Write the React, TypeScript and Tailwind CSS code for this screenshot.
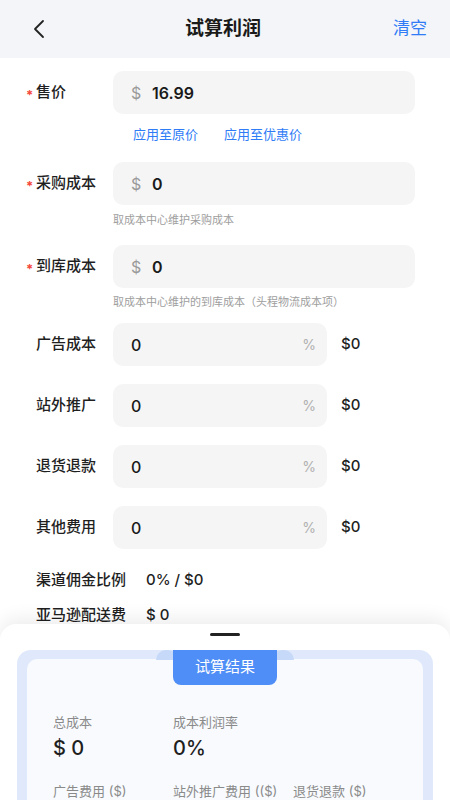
import React from "react";

const font = { fontFamily: '"Inter", "Noto Sans CJK SC", sans-serif' };

interface RowProps {
  label: string;
  required?: boolean;
  children: React.ReactNode;
  className?: string;
}

const Row: React.FC<RowProps> = ({ label, required, children, className }) => (
  <div className={`flex items-center ${className ?? ""}`}>
    <div className="flex w-[87px] shrink-0 items-center">
      <span className="w-[10px] pt-[5px] text-[13px] font-bold leading-none text-[#f5483b]">{required ? "*" : ""}</span>
      <span className="text-[15px] font-medium text-[#1f1f1f]">{label}</span>
    </div>
    {children}
  </div>
);

const MoneyInput: React.FC<{ value: string }> = ({ value }) => (
  <div className="flex h-[43px] w-[302px] items-center rounded-[10px] bg-[#f5f5f5] pl-[18px]">
    <span className="w-[21px] text-[16px] text-[#9a9a9a]">$</span>
    <span className="text-[16px] font-semibold text-[#1a1a1a]">{value}</span>
  </div>
);

const PercentRow: React.FC<{ label: string; className?: string }> = ({ label, className }) => (
  <Row label={label} className={className}>
    <div className="flex h-[43px] w-[214px] items-center justify-between rounded-[10px] bg-[#f5f5f5] pl-[18px] pr-[11px]">
      <span className="text-[16px] font-medium text-[#1a1a1a]">0</span>
      <span className="text-[14px] text-[#b0b0b0]">%</span>
    </div>
    <span className="ml-[14px] text-[15px] font-medium text-[#1f1f1f]">$0</span>
  </Row>
);

const Hint: React.FC<{ text: string; className?: string }> = ({ text, className }) => (
  <div className={`pl-[87px] text-[11px] leading-[15px] text-[#9e9e9e] ${className ?? ""}`}>{text}</div>
);

export default function App() {
  return (
    <div className="relative h-[800px] w-[450px] overflow-hidden bg-white" style={font}>
      <header className="flex h-[58px] items-center justify-between bg-[#f3f5f8] px-[23px]">
        <svg width="30" height="30" viewBox="0 0 30 30" fill="none">
          <polyline points="20,7 12,15 20,23" stroke="#222" strokeWidth="1.8" strokeLinecap="round" strokeLinejoin="round" />
        </svg>
        <h1 className="text-[19px] font-bold text-[#1a1a1a]">试算利润</h1>
        <button className="text-[17px] text-[#2f7cf6]">清空</button>
      </header>

      <main className="pl-[26px]">
        <Row label="售价" required className="mt-[13px]">
          <MoneyInput value="16.99" />
        </Row>
        <div className="mt-[12px] flex gap-[26px] pl-[107px] text-[13px] leading-[16px] text-[#2f7cf6]">
          <span>应用至原价</span>
          <span>应用至优惠价</span>
        </div>

        <Row label="采购成本" required className="mt-[20px]">
          <MoneyInput value="0" />
        </Row>
        <Hint text="取成本中心维护采购成本" className="mt-[8px]" />

        <Row label="到库成本" required className="mt-[17px]">
          <MoneyInput value="0" />
        </Row>
        <Hint text="取成本中心维护的到库成本（头程物流成本项）" className="mt-[7px]" />

        <PercentRow label="广告成本" className="mt-[13px]" />
        <PercentRow label="站外推广" className="mt-[18px]" />
        <PercentRow label="退货退款" className="mt-[18px]" />
        <PercentRow label="其他费用" className="mt-[18px]" />

        <div className="mt-[20px] flex h-[22px] items-center pl-[10px] text-[15px] font-medium text-[#1f1f1f]">
          <span className="w-[110px]">渠道佣金比例</span>
          <span>0% / $0</span>
        </div>
        <div className="mt-[13px] flex h-[22px] items-center pl-[10px] text-[15px] font-medium text-[#1f1f1f]">
          <span className="w-[110px]">亚马逊配送费</span>
          <span>$ 0</span>
        </div>
      </main>

      <section className="absolute bottom-0 left-0 h-[176px] w-[450px] rounded-t-[16px] bg-white shadow-[0_-6px_18px_rgba(0,0,0,0.07)]">
        <div className="mx-auto mt-[9px] h-[3px] w-[30px] rounded-full bg-[#222]" />
        <div className="relative mx-[17px] mt-[14px] h-[200px] rounded-[14px] bg-[#dfe9fb] px-[10px] pt-[9px]">
          <div className="absolute left-[139px] top-0 h-[10px] w-[22px] rounded-t-full bg-[#c6d9f8]" />
          <div className="absolute right-[139px] top-0 h-[10px] w-[22px] rounded-t-full bg-[#c6d9f8]" />
          <div className="h-full rounded-[10px] bg-[#f8fafe] px-[26px]">
            <div className="flex h-[26px] justify-center">
              <div className="relative -mt-[9px] flex h-[35px] w-[104px] items-center justify-center rounded-b-[8px] bg-[#4f8ef6] text-[15px] text-white">
                试算结果
              </div>
            </div>
            <div className="mt-[29px] flex">
              <div className="w-[120px]">
                <div className="text-[13px] leading-[16px] text-[#8a8a8a]">总成本</div>
                <div className="mt-[5px] text-[20px] font-medium leading-[26px] text-[#1f1f1f]">$ 0</div>
              </div>
              <div className="w-[120px]">
                <div className="text-[13px] leading-[16px] text-[#8a8a8a]">成本利润率</div>
                <div className="mt-[5px] text-[20px] font-medium leading-[26px] text-[#1f1f1f]">0%</div>
              </div>
            </div>
            <div className="mt-[22px] flex text-[13px] leading-[16px] text-[#8a8a8a]">
              <span className="w-[120px]">广告费用 ($)</span>
              <span className="w-[120px]">站外推广费用 (($)</span>
              <span>退货退款 ($)</span>
            </div>
          </div>
        </div>
      </section>
    </div>
  );
}
